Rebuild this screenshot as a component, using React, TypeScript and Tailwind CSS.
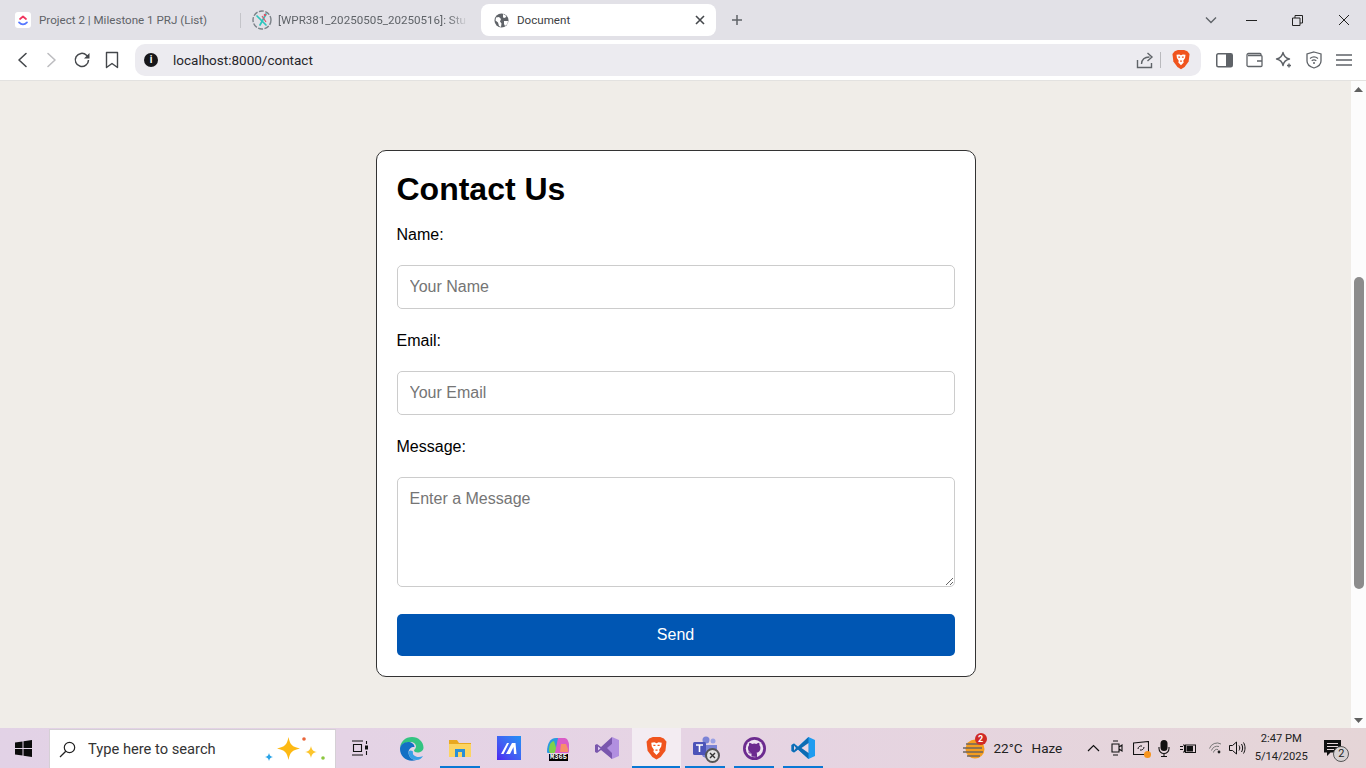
import React from "react";

const chrome = { fontFamily: "Roboto, 'Noto Sans', sans-serif" };

function I({ w = 20, h = 20, vb, children }: { w?: number; h?: number; vb?: string; children: React.ReactNode }) {
  return (
    <svg width={w} height={h} viewBox={vb ?? `0 0 ${w} ${h}`} fill="none" className="block shrink-0">
      {children}
    </svg>
  );
}

function BraveLogo({ s = 18 }: { s?: number }) {
  return (
    <I w={s} h={s * 1.15} vb="0 0 20 23">
      <path d="M3 2.5 6.5 1h7L17 2.5 19.5 5.5 18.5 14 14 20 10 22.5 6 20 1.5 14 .5 5.5Z" fill="#f0541e" />
      <path d="M5 6.5 8 6 10 7 12 6 15 6.5 14.5 10 12.5 13 13 15 10 18 7 15 7.5 13 5.5 10Z" fill="#fff" />
      <path d="M7 9h2M11 9h2M9 13.5h2" stroke="#f0541e" strokeWidth="1.2" />
    </I>
  );
}

function Toolbtn({ children }: { children: React.ReactNode }) {
  return <div className="flex items-center justify-center shrink-0 w-[30px]">{children}</div>;
}

function TabStrip() {
  return (
    <div className="h-10 bg-[#e2e1e7] flex items-center shrink-0 text-[11.6px] text-[#5f6368]" style={chrome}>
      <div className="ml-[15px] w-4 h-4 rounded-[3px] bg-white flex items-center justify-center shrink-0">
        <I w={12} h={12}>
          <path d="M3 5 6 2.5 9 5" stroke="#f0365f" strokeWidth="1.7" strokeLinecap="round" strokeLinejoin="round" />
          <path d="M2 8.3C4.5 11 7.5 11 10 8.3" stroke="#5577ff" strokeWidth="1.7" strokeLinecap="round" />
        </I>
      </div>
      <span className="ml-2 mt-px w-[201px] whitespace-nowrap shrink-0">Project 2 | Milestone 1 PRJ (List)</span>
      <div className="w-px h-[15px] bg-[#c4c4c9] shrink-0" />
      <div className="ml-[11px] shrink-0">
        <I w={20} h={20}>
          <circle cx="10" cy="10" r="9" stroke="#7b8288" strokeWidth="1.4" strokeDasharray="5 1.5" />
          <path d="M5 6 14 15M14 4 8 15" stroke="#2cc5bd" strokeWidth="1.7" strokeLinecap="round" />
          <path d="M10 6 14 12" stroke="#d9566a" strokeWidth="1.2" />
          <circle cx="13" cy="5" r="1.3" fill="#d9566a" />
        </I>
      </div>
      <span className="ml-[6px] mt-px w-[190px] whitespace-nowrap shrink-0 [mask-image:linear-gradient(to_right,black_90%,transparent)]">
        [WPR381_20250505_20250516]: Stu
      </span>
      <div className="ml-[13px] w-[235px] h-8 bg-white rounded-lg flex items-center shrink-0 text-[#3c4043]">
        <div className="ml-[13px] shrink-0">
          <I w={15} h={15}>
            <circle cx="7.5" cy="7.5" r="7" fill="#5f6368" />
            <path d="M2 4.5 5 4 7 6 6 8.5 7.5 10.5 7 14 5 13 4 9.5 1.5 7.5ZM9 1 12.5 3 11 5 9 4.5ZM10 8h4l-.5 3L11 13l-1-2Z" fill="#fff" />
          </I>
        </div>
        <span className="ml-[8px] mt-px flex-1">Document</span>
        <div className="mr-[11px]">
          <I w={10} h={10}>
            <path d="M1 1 9 9M9 1 1 9" stroke="#45484c" strokeWidth="1.6" />
          </I>
        </div>
      </div>
      <div className="ml-[15px] shrink-0">
        <I w={12} h={12}>
          <path d="M6 1v10M1 6h10" stroke="#5f6368" strokeWidth="1.5" />
        </I>
      </div>
      <div className="ml-[462px] shrink-0">
        <I w={12} h={8}>
          <path d="M1 1.5 6 6.5 11 1.5" stroke="#5f6368" strokeWidth="1.4" />
        </I>
      </div>
      <div className="ml-[29px] shrink-0 w-[11px] h-px bg-[#222]" />
      <div className="ml-[35px] shrink-0">
        <I w={11} h={11}>
          <path d="M.5 3h7.5v7.5H.5ZM3 3V.5h7.5V8H8" stroke="#222" strokeWidth="1" />
        </I>
      </div>
      <div className="ml-[35px] shrink-0">
        <I w={12} h={12}>
          <path d="M1 1 11 11M11 1 1 11" stroke="#222" strokeWidth="1" />
        </I>
      </div>
    </div>
  );
}

function Toolbar() {
  return (
    <div className="h-[41px] bg-white border-b border-[#e3e2e0] flex items-center shrink-0 pb-px pl-[7px]" style={chrome}>
      <Toolbtn>
        <I w={12} h={16}>
          <path d="M10 1.5 3 8l7 6.5" stroke="#44474b" strokeWidth="1.6" strokeLinecap="round" strokeLinejoin="round" />
        </I>
      </Toolbtn>
      <Toolbtn>
        <I w={12} h={16}>
          <path d="M2 1.5 9 8l-7 6.5" stroke="#bdbdc0" strokeWidth="1.6" strokeLinecap="round" strokeLinejoin="round" />
        </I>
      </Toolbtn>
      <Toolbtn>
        <I w={18} h={18}>
          <path d="M15.5 9a6.6 6.6 0 1 1-2-4.8L15.5 6" stroke="#44474b" strokeWidth="1.5" />
          <path d="M16.5 2v5.5H11Z" fill="#44474b" />
        </I>
      </Toolbtn>
      <Toolbtn>
        <I w={14} h={18}>
          <path d="M1.5 1.5h11v15L7 12.5l-5.5 4Z" stroke="#44474b" strokeWidth="1.4" strokeLinejoin="round" />
        </I>
      </Toolbtn>
      <div className="ml-[8px] w-[1066px] h-8 bg-[#ecebf0] rounded-[10px] flex items-center shrink-0">
        <div className="ml-[9px] w-[14px] h-[14px] rounded-full bg-[#17171a] flex items-center justify-center shrink-0 text-white text-[10px] font-bold leading-none">
          i
        </div>
        <span className="ml-[15px] mt-[2px] text-[13.5px] text-[#26262b] flex-1">localhost:8000/contact</span>
        <I w={18} h={18}>
          <path d="M1.5 9v7.5h14V12" stroke="#5f6368" strokeWidth="1.4" />
          <path d="M5.5 13c.3-4.500 3.500-7 8-7M11.500 2l4.500 4-4.500 4" stroke="#5f6368" strokeWidth="1.4" />
        </I>
        <div className="ml-[6px] w-px h-4 bg-[#b9b9bd] shrink-0" />
        <div className="ml-[11px] mr-[11px] shrink-0">
          <BraveLogo />
        </div>
      </div>
      <div className="ml-[8px] shrink-0 w-[30px] flex justify-center">
        <I w={17} h={16}>
          <rect x=".75" y="1.750" width="15.500" height="13" rx="1.500" stroke="#5f6368" strokeWidth="1.500" />
          <rect x="10" y="2" width="6" height="12.500" fill="#5f6368" />
        </I>
      </div>
      <div className="shrink-0 w-[30px] flex justify-center">
        <I w={17} h={16}>
          <path d="M15 3.500V2.500a1 1 0 0 0-1-1H2.500a1.500 1.500 0 0 0-1.500 1.500v10.500A1.500 1.500 0 0 0 2.500 14.500H15a1 1 0 0 0 1-1V4.500a1 1 0 0 0-1-1H2M11 9h5" stroke="#5f6368" strokeWidth="1.300" />
        </I>
      </div>
      <div className="shrink-0 w-[30px] flex justify-center">
        <I w={18} h={18}>
          <path d="M8 1.500c.8 4 2.500 5.700 6.500 6.500-4 .8-5.700 2.500-6.500 6.500C7.200 10.500 5.500 8.800 1.500 8c4-.8 5.700-2.500 6.500-6.500Z" stroke="#5f6368" strokeWidth="1.400" strokeLinejoin="round" />
          <path d="M14 12.500v4M12 14.500h4" stroke="#5f6368" strokeWidth="1.400" />
        </I>
      </div>
      <div className="shrink-0 w-[30px] flex justify-center">
        <I w={16} h={18}>
          <path d="M8 1 15 3v7c0 3.500-3 5.800-7 7-4-1.200-7-3.500-7-7V3Z" stroke="#5f6368" strokeWidth="1.300" />
          <path d="M4 7.500c2.500-2 5.500-2 8 0M5.700 9.700c1.500-1 3.100-1 4.600 0" stroke="#5f6368" strokeWidth="1.200" />
          <circle cx="8" cy="12" r="1" fill="#5f6368" />
        </I>
      </div>
      <div className="shrink-0 w-[30px] flex justify-center">
        <I w={16} h={14}>
          <path d="M0 2h16M0 7h16M0 12h16" stroke="#5f6368" strokeWidth="1.500" />
        </I>
      </div>
    </div>
  );
}

function Field({ label, ph, last }: { label: string; ph: string; last?: boolean }) {
  const inputCls =
    "block w-full mt-[21px] border border-[#ccc] rounded-[5px] bg-white px-3 text-[16px] text-black placeholder:text-[#757575] outline-none";
  return (
    <div className="mb-[23px]">
      <label className="block text-[16px] leading-[18px] text-black">{label}:</label>
      {last ? (
        <textarea placeholder={ph} className={`${inputCls} h-[110px] py-[9px]`} />
      ) : (
        <input placeholder={ph} className={`${inputCls} h-[44px]`} />
      )}
    </div>
  );
}

function Page() {
  return (
    <div className="flex flex-1 min-h-0">
      <div className="flex-1 bg-[#f0ede8] flex justify-center pt-[69px]" style={{ fontFamily: "'Liberation Sans', Arial, sans-serif" }}>
        <form className="w-[600px] h-[527px] bg-white border border-[#333] rounded-[10px] px-5 pt-[20px] shrink-0">
          <h1 className="text-[32px] font-bold leading-[37px] text-black mb-[18px]">Contact Us</h1>
          <Field label="Name" ph="Your Name" />
          <Field label="Email" ph="Your Email" />
          <Field label="Message" ph="Enter a Message" last />
          <button type="button" className="block w-full h-[42px] mt-[27px] rounded-[5px] bg-[#0056b3] text-white text-[16px]">
            Send
          </button>
        </form>
      </div>
      <div className="w-[15px] bg-[#fcfcfc] flex flex-col items-center shrink-0">
        <div className="h-4 flex items-center justify-center shrink-0">
          <I w={9} h={5}>
            <path d="M4.500 0 9 5H0Z" fill="#606060" />
          </I>
        </div>
        <div className="mt-[180px] w-[10px] h-[312px] rounded-[5px] bg-[#8c8c8c] shrink-0" />
        <div className="mt-auto h-4 flex items-center justify-center shrink-0">
          <I w={9} h={5}>
            <path d="M4.500 5 9 0H0Z" fill="#606060" />
          </I>
        </div>
      </div>
    </div>
  );
}

function Cell({ children, run, active }: { children: React.ReactNode; run?: boolean; active?: boolean }) {
  return (
    <div className={`relative h-10 w-[49px] shrink-0 flex items-center justify-center ${active ? "bg-[#f3ecf2]" : ""}`}>
      {children}
      {run && <div className={`absolute bottom-0 h-[2px] ${active ? "left-0 w-[48px]" : "left-[4px] w-[40px]"} bg-[#0a78d4]`} />}
    </div>
  );
}

function Taskbar() {
  return (
    <div className="h-10 flex items-center shrink-0 bg-gradient-to-r from-[#e2d2e6] via-[#e6d4e4] to-[#e5d5d7]" style={chrome}>
      <div className="w-[49px] flex justify-center shrink-0 pr-[2px]">
        <I w={17} h={17}>
          <path d="M0 2.500 7.500 1.400V8H0ZM8.500 1.200 17 0V8H8.500ZM0 9H7.500V15.600L0 14.500ZM8.500 9H17V17L8.500 15.800Z" fill="#0b0b0b" />
        </I>
      </div>
      <div className="w-[287px] h-[39px] mt-px bg-white border-t border-x border-[#d5d0d5] flex items-center shrink-0">
        <div className="ml-[9px]">
          <I w={17} h={17}>
            <circle cx="10.500" cy="6.500" r="5.200" stroke="#222" strokeWidth="1.200" />
            <path d="M6.800 10.300 1 16" stroke="#222" strokeWidth="1.300" />
          </I>
        </div>
        <span className="ml-[12px] text-[14.7px] text-[#333] whitespace-nowrap flex-1">Type here to search</span>
        <div className="mr-[9px]">
          <I w={62} h={30}>
            <path d="M24.500 3c1.700 8 3.500 9.700 11.500 11.500-8 1.800-9.800 3.500-11.500 11.500-1.700-8-3.500-9.700-11.500-11.500 8-1.800 9.800-3.500 11.500-11.500Z" fill="#fdb913" />
            <path d="M47 12c.8 3.500 1.700 5.200 6 6-4.300.8-5.200 2.500-6 6-.8-3.500-1.700-5.200-6-6 4.300-.8 5.200-2.500 6-6Z" fill="#fcc52d" />
            <path d="M5 19c.5 2.500 1.500 3.500 4 4-2.500.5-3.500 1.500-4 4-.5-2.500-1.500-3.500-4-4 2.500-.5 3.500-1.500 4-4Z" fill="#2aa4e8" />
            <circle cx="40" cy="5" r="1.800" fill="#e9653a" />
            <circle cx="59" cy="24" r="1.800" fill="#8cc63f" />
          </I>
        </div>
      </div>
      <div className="w-[48px] flex justify-center shrink-0 mr-[2.500px]">
        <I w={17} h={16}>
          <path d="M0 1h11M0 15h11M1.500 4.500h8v7h-8ZM14.500 1v3M14.500 11v4" stroke="#111" strokeWidth="1.100" />
          <rect x="13" y="5.500" width="3" height="4" fill="#111" />
        </I>
      </div>
      <Cell>
        <I w={25} h={25}>
          <path d="M1 13C1 5.500 6.500 1 13 1c6.500 0 11.500 5 11.500 10.500 0 3.500-3 5-6 5-2 0-3.500-.8-3.500-2 0-1 2-1.500 2-4 0-2.500-2.500-4.500-5.500-4.500C7 6 1 8 1 13Z" fill="#33c481" />
          <path d="M1 13c0-4 4-7 8-7 3.500 0 6.500 2 6.500 5-2.500-.5-6 1.500-6 5.500 0 4 3.500 7.500 8 7.500-1.500.5-3 .8-4.500.8C6 24.800 1 19.500 1 13Z" fill="#1270c4" />
          <path d="M9.500 16.500c0 4 3.500 7.500 8 7.500 3 0 5-1.500 6.500-4-2 1-4.500 1.500-7 .5-3-1-3.500-3-3-5-2.500-2-4.500-1-4.500 1Z" fill="#37a0e6" />
        </I>
      </Cell>
      <Cell run>
        <I w={22} h={20}>
          <path d="M0 2h8l2 3h12v4H0Z" fill="#e9a820" />
          <path d="M0 6h22v13H0Z" fill="#fcd462" />
          <path d="M6 11h10v8h-3v-5H9v5H6Z" fill="#2b8fd6" />
        </I>
      </Cell>
      <Cell>
        <div className="w-6 h-6 bg-gradient-to-tr from-[#4d20f0] to-[#1e90f5] flex items-center justify-center">
          <I w={18} h={14}>
            <path d="M1 13 7 2h2L3.500 13ZM6 13 12 2h3.500L16.500 13H14L13.500 6 10 13Z" fill="#fff" />
          </I>
        </div>
      </Cell>
      <Cell>
        <div className="relative w-6 h-[24px]">
          <I w={24} h={19}>
            <path d="M1 16C1 8 4 2 10 2h5l-3 8-4 7H4c-2 0-3 0-3-1Z" fill="#2a9ae0" />
            <path d="M3 15c0-5 1-9 5-10l3 10-3 2H4Z" fill="#7fd14a" />
            <path d="M12 2h6c3 0 4 2 5 6v7c0 2-1 2-3 2H9Z" fill="#d95cc7" />
            <path d="M15 8h5l2 5v3H14Z" fill="#f78f6a" />
          </I>
          <span className="absolute left-[3px] bottom-[-1px] w-[19px] h-[7px] bg-black text-white text-[7px] leading-[7px] text-center font-bold" style={{ fontFamily: "'Liberation Mono', monospace" }}>
            M365
          </span>
        </div>
      </Cell>
      <Cell>
        <I w={24} h={24}>
          <path d="M17 1 24 4v16l-7 3-9-9 9-6Z" fill="#b18fe0" />
          <path d="M17 1 6 11 2 8 0 9v7l2 1 4-3 11 9V17l-5-5 5-4Z" fill="#7a57ad" />
          <path d="M3 10.500 5.500 12.500 3 14.500Z" fill="#dccbf2" />
        </I>
      </Cell>
      <Cell run active>
        <BraveLogo s={21} />
      </Cell>
      <Cell run>
        <div className="relative w-[26px] h-[26px]">
          <I w={26} h={24}>
            <circle cx="14" cy="5" r="3.500" fill="#7b83d6" />
            <circle cx="21" cy="6" r="2.500" fill="#9aa1e4" />
            <path d="M9 10h16v7a6 6 0 0 1-6 6h-4a6 6 0 0 1-6-6Z" fill="#7b83d6" />
            <rect x="1" y="7" width="13" height="13" rx="1.500" fill="#4c53b8" />
            <path d="M4 10h7M7.500 10v7" stroke="#fff" strokeWidth="1.600" />
          </I>
          <div className="absolute right-[-2px] bottom-[-2px] w-[15px] h-[15px] rounded-full bg-[#e2e2e2] border-2 border-[#555] flex items-center justify-center">
            <I w={7} h={7}>
              <path d="M1 1 6 6M6 1 1 6" stroke="#333" strokeWidth="1.400" />
            </I>
          </div>
        </div>
      </Cell>
      <Cell run>
        <I w={23} h={23}>
          <circle cx="11.500" cy="11.500" r="11.500" fill="#6c2b8f" />
          <circle cx="11.500" cy="11.500" r="8.700" fill="#efe4f1" />
          <path d="M8.500 19.500v-3c-2 .4-3-.5-3.500-2 1 .3 1.500 1 3 1.300-2.500-1-3-3-3-5 0-1 .4-1.800 1-2.500 0-1 0-2 .5-2.500 1 0 2 .8 2.500 1.200a7 7 0 0 1 4.500 0c.5-.4 1.500-1.200 2.500-1.200.5.500.5 1.500.5 2.500.6.700 1 1.500 1 2.500 0 3-1.500 4.500-4 5 .5.500.5 1 .5 2v2.200Z" fill="#6c2b8f" />
        </I>
      </Cell>
      <Cell run>
        <I w={24} h={24}>
          <path d="M17.500 1 24 4v16l-6.500 3L7 13.500l-4 3-2.500-1.500V9L3 7.500l4 3Z" fill="#1f9cf0" />
          <path d="M17.500 1v22L7 13.500 3 16.500.5 15V9L3 7.500l4 3.500Z" fill="#0d6cb3" />
          <path d="M17.500 7 10.500 12l7 5Z" fill="#e9d7e4" />
          <path d="M3 9.500 5 12 3 14.500Z" fill="#e9d7e4" />
        </I>
      </Cell>
      <div className="ml-[134px] relative shrink-0">
        <I w={24} h={21}>
          <circle cx="13" cy="11" r="9.500" fill="#f59d1f" />
          <path d="M4 6h15M1 10h19M1 14h20M5 18h13" stroke="#6d6660" strokeWidth="1.700" />
        </I>
        <div className="absolute top-[-5px] right-[-1px] w-3 h-3 rounded-full bg-[#d02a26] text-white text-[9px] leading-3 text-center font-bold">2</div>
      </div>
      <span className="ml-[8px] text-[13.5px] text-[#222] whitespace-nowrap shrink-0">22°C</span>
      <span className="ml-[9px] text-[13.5px] text-[#222] whitespace-nowrap shrink-0">Haze</span>
      <div className="ml-[25px] shrink-0">
        <I w={13} h={8}>
          <path d="M1 7 6.500 1.500 12 7" stroke="#111" strokeWidth="1.200" />
        </I>
      </div>
      <div className="ml-[11px] shrink-0">
        <I w={12} h={16}>
          <path d="M2 1h5M2 15h5M1 4h7v8H1ZM8 7l3-2v6L8 9" stroke="#111" strokeWidth="1.100" />
        </I>
      </div>
      <div className="relative ml-[10px] shrink-0">
        <I w={16} h={15}>
          <path d="M.5 2 15.500.5V13.500H.5Z" stroke="#111" strokeWidth="1.100" />
          <path d="M5 8c0-2 2-3.500 4-3M11 6c0 2-2 3.500-4 3" stroke="#111" strokeWidth="1" />
        </I>
        <div className="absolute right-[-2px] bottom-[-2px] w-[7px] h-[7px] rounded-full bg-[#f7941d]" />
      </div>
      <div className="ml-[9px] shrink-0">
        <I w={12} h={17}>
          <rect x="2.500" y="0" width="7" height="11" rx="3.500" fill="#111" />
          <path d="M1 7v1.500a5 5 0 0 0 10 0V7M6 13.500V16M3 16.500h6" stroke="#111" strokeWidth="1.100" />
        </I>
      </div>
      <div className="ml-[10px] shrink-0">
        <I w={17} h={11}>
          <path d="M0 3.500h3M0 6.500h3M3 2h1.500v7H3" stroke="#111" strokeWidth="1" />
          <rect x="5.500" y="2" width="10" height="7.500" stroke="#111" strokeWidth="1" />
          <rect x="6.500" y="3" width="6.500" height="5.500" fill="#111" />
        </I>
      </div>
      <div className="ml-[12px] shrink-0">
        <I w={13} h={12}>
          <path d="M.5 6.500A8 8 0 0 1 12 2M2.500 8.500A6 6 0 0 1 10 4.500M4.500 10.500A3.500 3.500 0 0 1 9 7.500" stroke="#777" strokeWidth="1" />
          <circle cx="10" cy="10" r="1.400" fill="#222" />
        </I>
      </div>
      <div className="ml-[7px] shrink-0">
        <I w={17} h={14}>
          <path d="M.5 4.500h3L7.500 1v12L3.500 9.500h-3Z" stroke="#111" strokeWidth="1" />
          <path d="M10 4.500c1 1.500 1 3.500 0 5M12.500 3c1.500 2.500 1.500 5.500 0 8M14.500 1.500c2 3.500 2 7.500 0 11" stroke="#111" strokeWidth="1" />
        </I>
      </div>
      <div className="ml-[5px] w-[60px] shrink-0 flex flex-col items-center text-[11.2px] leading-[18px] text-[#222]">
        <span>2:47 PM</span>
        <span>5/14/2025</span>
      </div>
      <div className="relative ml-[13px] shrink-0">
        <I w={17} h={17}>
          <path d="M0 0h17v12.500H6.500L3 16v-3.500H0Z" fill="#111" />
          <path d="M3 3.500h11M3 6.500h11M3 9.500h7" stroke="#e6d6d9" strokeWidth="1" />
        </I>
        <div className="absolute right-[-8px] bottom-[-5px] w-4 h-4 rounded-full bg-[#d8d2d3] border border-[#555] text-[11px] leading-[14px] text-center text-[#222]">2</div>
      </div>
    </div>
  );
}

export default function App() {
  return (
    <div className="w-[1366px] h-[768px] flex flex-col overflow-hidden">
      <TabStrip />
      <Toolbar />
      <Page />
      <Taskbar />
    </div>
  );
}
